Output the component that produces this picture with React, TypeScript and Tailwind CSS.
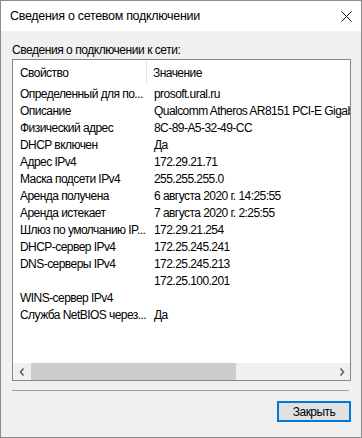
const rows: [string, string][] = [
  ["Определенный для по...", "prosoft.ural.ru"],
  ["Описание", "Qualcomm Atheros AR8151 PCI-E Gigabit Ethernet"],
  ["Физический адрес", "8C-89-A5-32-49-CC"],
  ["DHCP включен", "Да"],
  ["Адрес IPv4", "172.29.21.71"],
  ["Маска подсети IPv4", "255.255.255.0"],
  ["Аренда получена", "6 августа 2020 г. 14:25:55"],
  ["Аренда истекает", "7 августа 2020 г. 2:25:55"],
  ["Шлюз по умолчанию IP...", "172.29.21.254"],
  ["DHCP-сервер IPv4", "172.25.245.241"],
  ["DNS-серверы IPv4", "172.25.245.213"],
  ["", "172.25.100.201"],
  ["WINS-сервер IPv4", ""],
  ["Служба NetBIOS через...", "Да"],
];

export default function App() {
  return (
    <div className="w-[362px] h-[438px] flex flex-col border border-[#8c8c8c] bg-[#f0f0f0] text-black font-['Liberation_Sans',sans-serif] text-[12px] tracking-[-0.55px]">
      {/* Title bar */}
      <div className="h-[30px] shrink-0 bg-white flex items-center justify-between pl-[9px] pr-[9px]">
        <span className="text-[12.5px] leading-none tracking-[-0.3px]">Сведения о сетевом подключении</span>
        <svg width="11" height="11" viewBox="0 0 11 11">
          <path d="M0.5 0.5 L10.5 10.5 M10.5 0.5 L0.5 10.5" stroke="#111" strokeWidth="1" />
        </svg>
      </div>

      {/* Body */}
      <div className="flex-1 flex flex-col px-[11px] pt-[11px]">
        <div className="h-[16px] leading-[16px] mb-[1px] tracking-[-0.45px]">Сведения о подключении к сети:</div>

        <div className="w-[339px] h-[322px] border border-[#828790] bg-white flex flex-col">
          {/* Header */}
          <div className="h-[25px] shrink-0 flex items-center">
            <div className="w-[134px] pl-[7px] border-r border-[#e5e5e5] h-[23px] flex items-center">Свойство</div>
            <div className="pl-[6px]">Значение</div>
          </div>

          {/* Rows */}
          {rows.map(([k, v], i) => (
            <div key={i} className="h-[17px] shrink-0 flex items-center whitespace-nowrap">
              <div className="w-[134px] shrink-0 pl-[7px] overflow-hidden">{k}</div>
              <div className="flex-1 pl-[7px] overflow-hidden">{v}</div>
            </div>
          ))}

          <div className="flex-1" />

          {/* Horizontal scrollbar */}
          <div className="h-[17px] shrink-0 bg-[#f0f0f0] flex items-stretch">
            <div className="w-[17px] flex items-center justify-center">
              <svg width="6" height="8" viewBox="0 0 6 8">
                <path d="M4.5 0.5 L1.5 4 L4.5 7.5" stroke="#606060" strokeWidth="1.6" fill="none" />
              </svg>
            </div>
            <div className="flex-1 flex items-stretch pl-[1px]">
              <div className="w-[205px] bg-[#cdcdcd]" />
            </div>
            <div className="w-[17px] flex items-center justify-center">
              <svg width="6" height="8" viewBox="0 0 6 8">
                <path d="M1.5 0.5 L4.5 4 L1.5 7.5" stroke="#606060" strokeWidth="1.6" fill="none" />
              </svg>
            </div>
          </div>
        </div>

        <div className="mt-[9px] w-[337px] h-px bg-[#a0a0a0]" />

        <div className="mt-[10px] flex justify-end w-[339px]">
          <button className="w-[74px] h-[21px] border-2 border-[#0078d7] bg-[#e1e1e1] flex items-center justify-center leading-none">
            Закрыть
          </button>
        </div>
      </div>
    </div>
  );
}
